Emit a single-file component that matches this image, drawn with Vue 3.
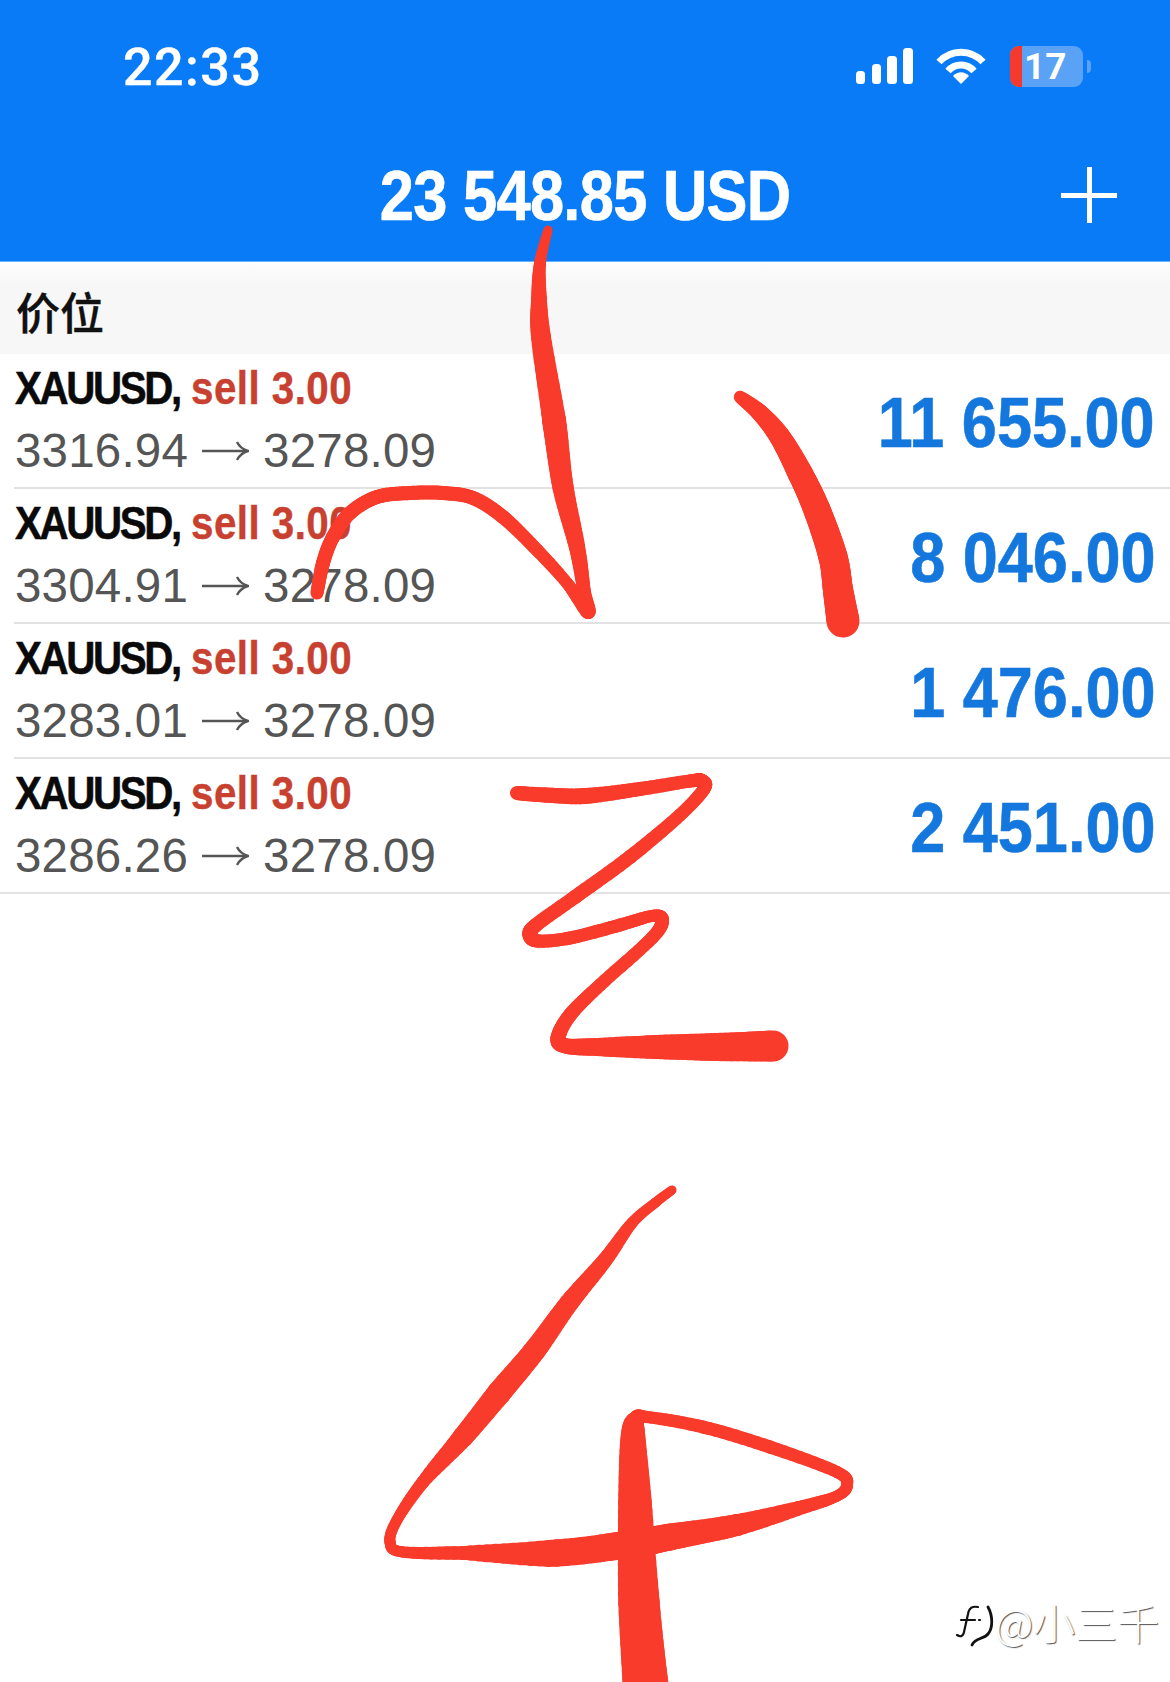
<script setup>
const rows = [
  { open: '3316.94', profit: '11 655.00' },
  { open: '3304.91', profit: '8 046.00' },
  { open: '3283.01', profit: '1 476.00' },
  { open: '3286.26', profit: '2 451.00' }
]

// hand-drawn marks: centre line points as [x, y, width]
const strokes = [
  // arc + long downstroke
  [[317, 593, 13], [323, 563, 14], [333, 537, 14], [350, 513, 14], [377, 497, 14], [410, 493, 14], [443, 493, 14], [473, 498, 14], [503, 517, 14],
   [537, 550, 13], [567, 583, 12], [588, 612, 14], [584, 590, 13], [577, 547, 16], [563, 487, 21], [554, 420, 24], [541, 337, 20], [539, 300, 16], [540, 263, 12], [548, 230, 9]],
  // right slash
  [[740, 397, 12], [760, 413, 17], [780, 437, 21], [800, 473, 25], [817, 510, 27], [833, 557, 29], [838, 590, 30], [843, 621, 33]],
  // Z
  [[517, 793, 14], [545, 795, 15], [585, 796, 16], [640, 789, 14], [690, 781, 13], [702, 781, 14], [704, 789, 13], [680, 815, 13], [630, 857, 14], [575, 897, 14],
   [536, 925, 14], [530, 935, 15], [538, 941, 13], [570, 938, 13], [620, 925, 13], [652, 916, 12], [662, 920, 14], [652, 938, 13], [600, 985, 13], [570, 1015, 14],
   [558, 1038, 15], [566, 1046, 15], [600, 1047, 18], [660, 1047, 24], [720, 1047, 28], [773, 1046, 31]],
  // 4
  [[672, 1190, 9], [655, 1203, 10], [632, 1223, 11], [605, 1260, 15], [569, 1303, 19], [535, 1350, 22], [499, 1393, 24], [463, 1437, 21], [423, 1482, 13], [397, 1520, 11], [390, 1542, 11],
   [403, 1552, 11], [470, 1553, 14], [557, 1553, 27], [637, 1543, 28], [670, 1537, 27], [737, 1525, 22], [803, 1507, 14], [837, 1496, 11], [847, 1485, 12], [837, 1472, 12],
   [770, 1447, 13], [703, 1427, 13], [647, 1417, 12], [636, 1419, 15], [633, 1437, 24], [635, 1503, 33], [639, 1603, 41], [646, 1690, 46]]
]

// catmull-rom through the points, cut into short lines so the width can change
function brush(points) {
  const out = []
  let prev = null
  for (let i = 0; i < points.length - 1; i++) {
    const p0 = points[Math.max(i - 1, 0)]
    const p1 = points[i]
    const p2 = points[i + 1]
    const p3 = points[Math.min(i + 2, points.length - 1)]
    for (let s = 0; s <= 10; s++) {
      const t = s / 10
      const t2 = t * t
      const t3 = t2 * t
      const x = 0.5 * (2 * p1[0] + (p2[0] - p0[0]) * t + (2 * p0[0] - 5 * p1[0] + 4 * p2[0] - p3[0]) * t2 + (3 * p1[0] - p0[0] - 3 * p2[0] + p3[0]) * t3)
      const y = 0.5 * (2 * p1[1] + (p2[1] - p0[1]) * t + (2 * p0[1] - 5 * p1[1] + 4 * p2[1] - p3[1]) * t2 + (3 * p1[1] - p0[1] - 3 * p2[1] + p3[1]) * t3)
      const w = p1[2] + (p2[2] - p1[2]) * t
      if (prev) out.push({ x1: prev.x, y1: prev.y, x2: x, y2: y, w })
      prev = { x, y }
    }
  }
  return out
}

const segments = strokes.flatMap(brush)
</script>

<template>
  <div class="page">
    <header class="top">
      <div class="status">
        <span class="time">22:33</span>
        <div class="status-icons">
          <svg class="signal" width="58" height="38" viewBox="0 0 58 38" fill="#fff">
            <rect x="0" y="24" width="9" height="13" rx="3.5" />
            <rect x="16" y="17" width="9" height="20" rx="3.5" />
            <rect x="31" y="9" width="10" height="28" rx="3.5" />
            <rect x="47" y="1" width="10" height="36" rx="3.5" />
          </svg>
          <svg class="wifi" width="50" height="38" viewBox="0 0 50 38" fill="none" stroke="#fff" stroke-width="7">
            <path d="M3 15 C15 2 35 2 47 15" />
            <path d="M12 24 C19 16 31 16 38 24" />
            <path d="M17 29 L25 37 L33 29 C28 24 22 24 17 29 Z" fill="#fff" stroke="none" />
          </svg>
          <div class="battery">
            <span class="battery-low"></span>
            <span class="battery-num">17</span>
          </div>
          <span class="battery-nub"></span>
        </div>
      </div>
      <div class="nav">
        <h1 class="balance">23 548.85 USD</h1>
        <span class="plus"></span>
      </div>
    </header>

    <div class="section">价位</div>

    <div v-for="(row, i) in rows" :key="i" class="row" :class="{ last: i === rows.length - 1 }">
      <div class="info">
        <div class="deal"><span class="symbol">XAUUSD,</span> <span class="side">sell 3.00</span></div>
        <div class="prices">
          <span>{{ row.open }}</span>
          <svg class="arrow" width="47" height="22" viewBox="0 0 47 22" fill="none" stroke="#555" stroke-width="2.4">
            <path d="M0 11 H45" />
            <path d="M35 2 C37 6 41 9.500 46 11 C41 12.500 37 16 35 20" />
          </svg>
          <span>3278.09</span>
        </div>
      </div>
      <div class="profit">{{ row.profit }}</div>
    </div>

    <svg class="marks" viewBox="0 0 1170 1682" stroke="#f93b2c" stroke-linecap="round">
      <line
        v-for="(s, i) in segments"
        :key="i"
        :x1="s.x1"
        :y1="s.y1"
        :x2="s.x2"
        :y2="s.y2"
        :stroke-width="s.w"
      />
    </svg>

    <div class="watermark">
      <svg class="logo" width="40" height="46" viewBox="0 0 40 46" fill="none" stroke="#111" stroke-width="2.2" stroke-linecap="round">
        <path d="M23 3 C17 2 14 4 13 10 L9 28 C8 33 5 33 2 31" />
        <path d="M6 16 L20 16" />
        <path d="M24 16 L25 16" />
        <path d="M33 3 C38 12 38 24 33 30 C29 35 20 34 17 41" stroke-width="2.8" />
      </svg>
      <span class="handle">@小三千</span>
    </div>
  </div>
</template>

<style scoped>
.page {
  position: relative;
  width: 1170px;
  height: 1682px;
  overflow: hidden;
  background: #fff;
  font-family: "Liberation Sans", Arial, sans-serif;
}

.top {
  height: 262px;
  box-sizing: border-box;
  background: #0a7bf6;
  border-bottom: 1px solid #63b2ff;
  color: #fff;
}

.status {
  display: flex;
  justify-content: space-between;
  align-items: center;
  height: 134px;
  padding: 1px 79px 0 123px;
  box-sizing: border-box;
}

.time {
  font-size: 52px;
  font-weight: 500;
  font-family: Roboto, "Liberation Sans", sans-serif;
  letter-spacing: 1.5px;
  -webkit-text-stroke: 0.4px #fff;
}

.status-icons {
  display: flex;
  align-items: center;
  margin-top: -3px;
}

.signal {
  margin-right: 22px;
}

.wifi {
  margin-right: 24px;
}

.battery {
  position: relative;
  display: flex;
  align-items: center;
  width: 73px;
  height: 41px;
  border-radius: 9px;
  background: #5aa2f6;
  overflow: hidden;
}

.battery-low {
  width: 12px;
  height: 100%;
  background: #f5392c;
}

.battery-num {
  margin-left: 2px;
  font-size: 37px;
  font-weight: 700;
  font-family: Roboto, "Liberation Sans", sans-serif;
}

.battery-nub {
  width: 4px;
  height: 13px;
  margin-left: 4px;
  border-radius: 0 4px 4px 0;
  background: #5aa2f6;
}

.nav {
  position: relative;
  display: flex;
  justify-content: center;
  align-items: center;
  height: 126px;
  padding-bottom: 2px;
  box-sizing: border-box;
}

.balance {
  margin: 0;
  font-size: 70px;
  font-weight: 700;
  line-height: 1;
  letter-spacing: -0.8px;
  white-space: nowrap;
  transform: scaleX(0.877);
  -webkit-text-stroke: 0.7px #fff;
}

.plus {
  position: absolute;
  right: 53px;
  top: 33px;
  width: 56px;
  height: 56px;
  background:
    linear-gradient(#fff, #fff) center / 100% 5px no-repeat,
    linear-gradient(#fff, #fff) center / 5px 100% no-repeat;
}

.section {
  display: flex;
  align-items: center;
  height: 92px;
  padding: 5px 0 0 16px;
  box-sizing: border-box;
  background: linear-gradient(#fdfdfd, #f7f7f7 25%);
  font-family: "Noto Sans CJK SC", sans-serif;
  font-size: 44px;
  font-weight: 500;
  color: #111;
  -webkit-text-stroke: 0.4px #111;
}

.row {
  display: flex;
  justify-content: space-between;
  align-items: center;
  height: 135px;
  margin-left: 14px;
  padding-right: 15px;
  box-sizing: border-box;
  border-bottom: 2px solid #e2e2e2;
}

.row.last {
  margin-left: 0;
  padding-left: 14px;
}

.info {
  white-space: nowrap;
}

.deal {
  padding-left: 1px;
  font-size: 46px;
  font-weight: 700;
  line-height: 54px;
  transform: scaleX(0.877);
  transform-origin: left center;
}

.symbol {
  color: #0a0a0a;
  letter-spacing: -2.7px;
  -webkit-text-stroke: 0.5px #0a0a0a;
}

.side {
  color: #c8402f;
  letter-spacing: 0.5px;
  -webkit-text-stroke: 0.4px #c8402f;
}

.prices {
  display: flex;
  align-items: center;
  margin-top: 6px;
  padding-left: 1px;
  font-size: 47.5px;
  line-height: 60px;
  letter-spacing: 0.2px;
  color: #555;
}

.arrow {
  margin: 0 14px;
}

.profit {
  margin-top: 4px;
  font-size: 70px;
  font-weight: 700;
  line-height: 1;
  color: #1477dd;
  white-space: nowrap;
  transform: scaleX(0.9);
  transform-origin: right center;
  -webkit-text-stroke: 0.6px #1477dd;
}

.marks {
  position: absolute;
  inset: 0;
  width: 1170px;
  height: 1682px;
  pointer-events: none;
}

.watermark {
  position: absolute;
  left: 955px;
  top: 1594px;
  display: flex;
  align-items: center;
  gap: 0;
}

.logo {
  margin-top: 10px;
}

.handle {
  font-family: "Noto Sans CJK SC", sans-serif;
  font-size: 42px;
  font-weight: 300;
  line-height: 46px;
  color: #fff;
  text-shadow: 1px 1px 1px #555;
}
</style>
